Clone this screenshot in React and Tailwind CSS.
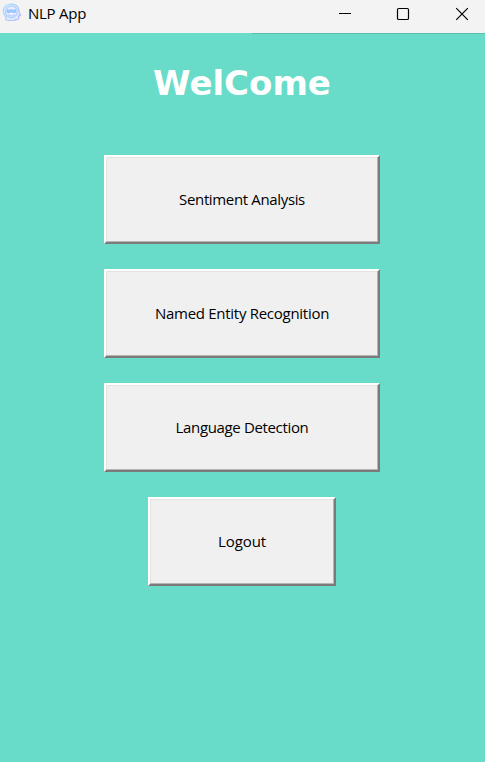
const buttons = [
  { label: "Sentiment Analysis", size: "w-[276px]", text: "tracking-[-0.35px]" },
  { label: "Named Entity Recognition", size: "w-[276px]", text: "tracking-[-0.28px]" },
  { label: "Language Detection", size: "w-[276px]", text: "tracking-[-0.35px]" },
  { label: "Logout", size: "w-[188px]", text: "tracking-[-0.1px]" },
];

function AppIcon() {
  return (
    <svg width="20" height="20" viewBox="0 0 20 20" fill="none">
      <defs>
        <linearGradient id="headStroke" x1="0" y1="0" x2="1" y2="1">
          <stop offset="0" stopColor="#a3e2fb" />
          <stop offset="1" stopColor="#b9b4fa" />
        </linearGradient>
      </defs>
      <path d="M4 17.500V14C.2 10.500.5 5 4.200 2.500C8 .2 13.800.500 16 4.500C17.200 6.700 16.700 8.200 17.400 10L18.500 12.200L16.700 13V15.500C16.500 16.800 14.500 16.500 13 16.700V18" fill="#dfeaff" stroke="url(#headStroke)" strokeWidth="1.300" />
      <circle cx="9.400" cy="8.800" r="5.800" fill="#e9efff" stroke="#aacdfb" strokeWidth="1.200" />
      <path d="M4.800 6.500H14V8.500C14 10.500 10.500 10.500 9.500 8.500C8.500 10.500 5 10.500 4.800 8.500Z" fill="#91c1fb" />
      <path d="M6.500 8H8M11 8H12.500" stroke="#c5deff" />
      <path d="M6 11.800Q9.500 14.500 13 11.800M5 17.500H12" stroke="#b5c4fb" strokeWidth="1" />
    </svg>
  );
}

function TitleBar() {
  return (
    <header className="flex h-[33px] items-start justify-between bg-[#f3f3f3]">
      <div className="flex items-start pl-[2px] pt-[3px]">
        <AppIcon />
        <span className="ml-[6px] text-[15px] leading-[20px] tracking-[-0.25px] text-black">NLP App</span>
      </div>
      <div className="flex gap-[45px] pr-[16px] pt-[7px]">
        <svg width="14" height="14" viewBox="0 0 14 14"><path d="M2 6.500H14" stroke="#000" /></svg>
        <svg width="14" height="14" viewBox="0 0 14 14" fill="none"><rect x="1.500" y="1.500" width="11" height="11" rx="1.300" stroke="#000" strokeWidth="1.200" /></svg>
        <svg width="14" height="14" viewBox="0 0 14 14"><path d="M1.200 1.200L12.800 12.800M12.800 1.200L1.200 12.800" stroke="#000" strokeWidth="1.200" /></svg>
      </div>
    </header>
  );
}

export default function App() {
  return (
    <div className="flex h-[762px] w-[485px] flex-col overflow-hidden bg-[#68dcc9] font-['Open_Sans','Noto_Sans',sans-serif]">
      <TitleBar />
      <div className="ml-[252px] h-px bg-[#5bbdad]" />
      <main className="flex flex-col items-center pr-px">
        <h1 className="mt-[29px] h-[40px] whitespace-nowrap font-['DejaVu_Sans',sans-serif] text-[34px] font-bold leading-[40px] text-white">WelCome</h1>
        <div className="mt-[52px] flex flex-col items-center gap-[25px]">
          {buttons.map(({ label, size, text }) => (
            <button
              key={label}
              className={`${size} flex h-[89px] items-center justify-center border-2 border-b-[#7b7b7b] border-l-white border-r-[#7b7b7b] border-t-white bg-[#f0f0f0] pb-px text-[15px] text-black shadow-[inset_-1px_-1px_0_#b5b5b5,inset_1px_1px_0_#e3e3e3]`}
            >
              <span className={`${text} whitespace-nowrap`}>{label}</span>
            </button>
          ))}
        </div>
      </main>
    </div>
  );
}
